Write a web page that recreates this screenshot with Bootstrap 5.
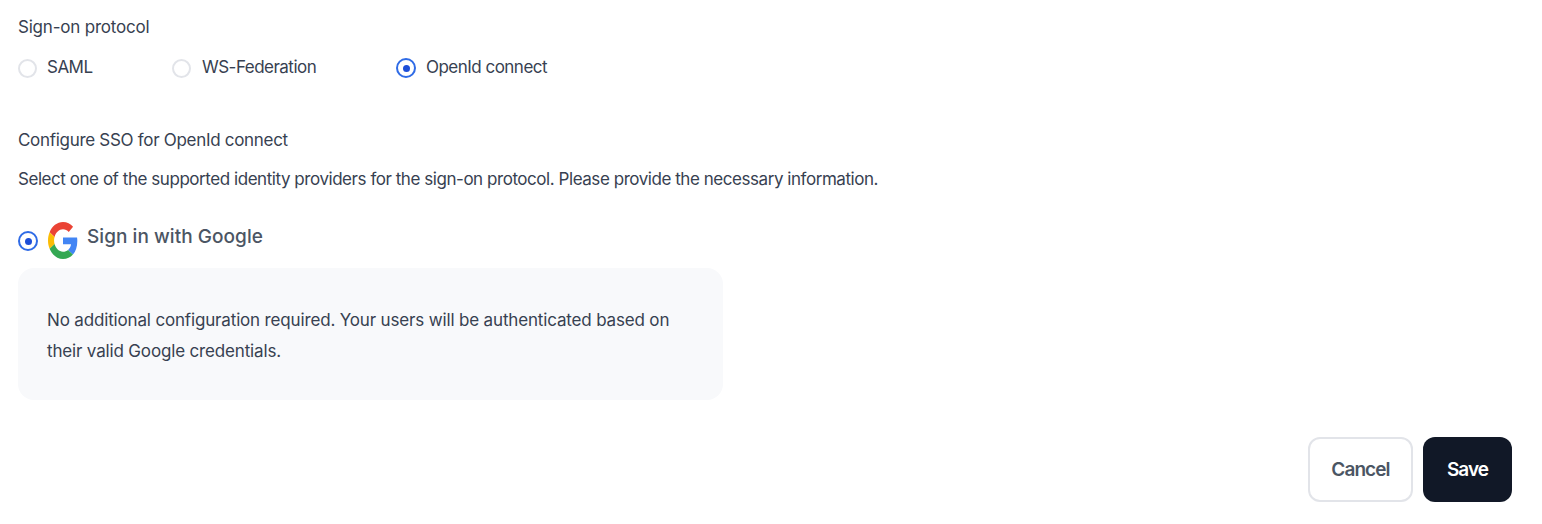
<!doctype html>
<html lang="en"><head><meta charset="utf-8"><title>SSO</title>
<link href="https://cdn.jsdelivr.net/npm/bootstrap@5.3.0/dist/css/bootstrap.min.css" rel="stylesheet">
<style>
html,body{height:524px;overflow:hidden}
body{background:#fff;color:#374151;font-family:Inter,"Liberation Sans",sans-serif;font-size:17px;letter-spacing:-.2px;padding:17px 30px 0 18px}
.fs-head{color:#374151;line-height:20px;height:20px;margin-bottom:19px}
.proto-row{height:22px;margin-bottom:52px}
.proto{display:flex;align-items:center;gap:10px;line-height:20px;letter-spacing:-.52px}
.proto>span:last-child{margin-top:-1px}
.p1{width:154px}.p2{width:224px;gap:11px}
.rd{width:19px;height:19px;border-radius:50%;border:2px solid #e2e4e9;background:#fff;flex:none;margin-top:2px}
.rd.on{width:20px;height:20px;border:2px solid #2f6be6;display:flex;align-items:center;justify-content:center}
.rd.on::after{content:"";width:7px;height:7px;border-radius:50%;background:#1d4ed8}
.txt-a{line-height:20px;margin-bottom:19px;letter-spacing:-.3px}
.txt-b{line-height:20px;margin-bottom:32px;letter-spacing:-.45px}
.gline{height:38px;gap:10px;margin-bottom:9px}
.gline .rd{margin-top:2px}
.gname{font-weight:500;color:#4b5563;font-size:19px;letter-spacing:.05px;margin-top:-6px;margin-left:-1px}
.infobox{width:705px;height:132px;background:#f8f9fb;border-radius:16px;padding:37px 30px 0 29px;line-height:31px;margin-bottom:37px;letter-spacing:-.16px}
.act{gap:10px}
.btn-c,.btn-s{height:65px;border-radius:12px;font-weight:600;font-size:19px;padding:2px 0 0;display:flex;align-items:center;justify-content:center}
.btn-c{width:105px;border:2px solid #e2e4e9;background:#fff;color:#4b5563;letter-spacing:-.9px}
.btn-s{width:89px;background:#111827;color:#fff;border:0;letter-spacing:-1px}
</style></head><body>
<div class="fs-head">Sign-on protocol</div>
<div class="d-flex proto-row">
<div class="proto p1"><span class="rd"></span><span>SAML</span></div>
<div class="proto p2"><span class="rd"></span><span>WS-Federation</span></div>
<div class="proto"><span class="rd on"></span><span>OpenId connect</span></div>
</div>
<div class="txt-a">Configure SSO for OpenId connect</div>
<div class="txt-b">Select one of the supported identity providers for the sign-on protocol. Please provide the necessary information.</div>
<div class="d-flex align-items-center gline">
<span class="rd on"></span>
<svg width="30" height="37" viewBox="0 0 48 48" preserveAspectRatio="none"><path fill="#EA4335" d="M24 9.500c3.500 0 6.700 1.200 9.200 3.600l6.900-6.900C35.900 2.400 30.500 0 24 0 14.600 0 6.500 5.400 2.600 13.200l8 6.200C12.400 13.700 17.700 9.500 24 9.500z"/><path fill="#4285F4" d="M46.900 24.500c0-1.600-.1-3.100-.4-4.500H24v9h12.900c-.6 3-2.200 5.500-4.800 7.200l7.800 6c4.500-4.200 7-10.300 7-17.700z"/><path fill="#FBBC05" d="M10.500 28.600c-.5-1.400-.8-3-.8-4.600s.3-3.200.8-4.600l-8-6.200C.9 16.500 0 20.100 0 24s.9 7.500 2.600 10.800l7.900-6.200z"/><path fill="#34A853" d="M24 48c6.500 0 11.900-2.100 15.900-5.800l-7.800-6c-2.200 1.500-4.900 2.300-8.100 2.300-6.300 0-11.600-4.200-13.500-9.900l-7.900 6.200C6.500 42.600 14.600 48 24 48z"/></svg>
<span class="gname">Sign in with Google</span>
</div>
<div class="infobox">No additional configuration required. Your users will be authenticated based on their valid Google credentials.</div>
<div class="d-flex justify-content-end act">
<button type="button" class="btn btn-c">Cancel</button>
<button type="button" class="btn btn-s">Save</button>
</div>
<script src="https://cdn.jsdelivr.net/npm/bootstrap@5.3.0/dist/js/bootstrap.bundle.min.js"></script>
</body></html>
